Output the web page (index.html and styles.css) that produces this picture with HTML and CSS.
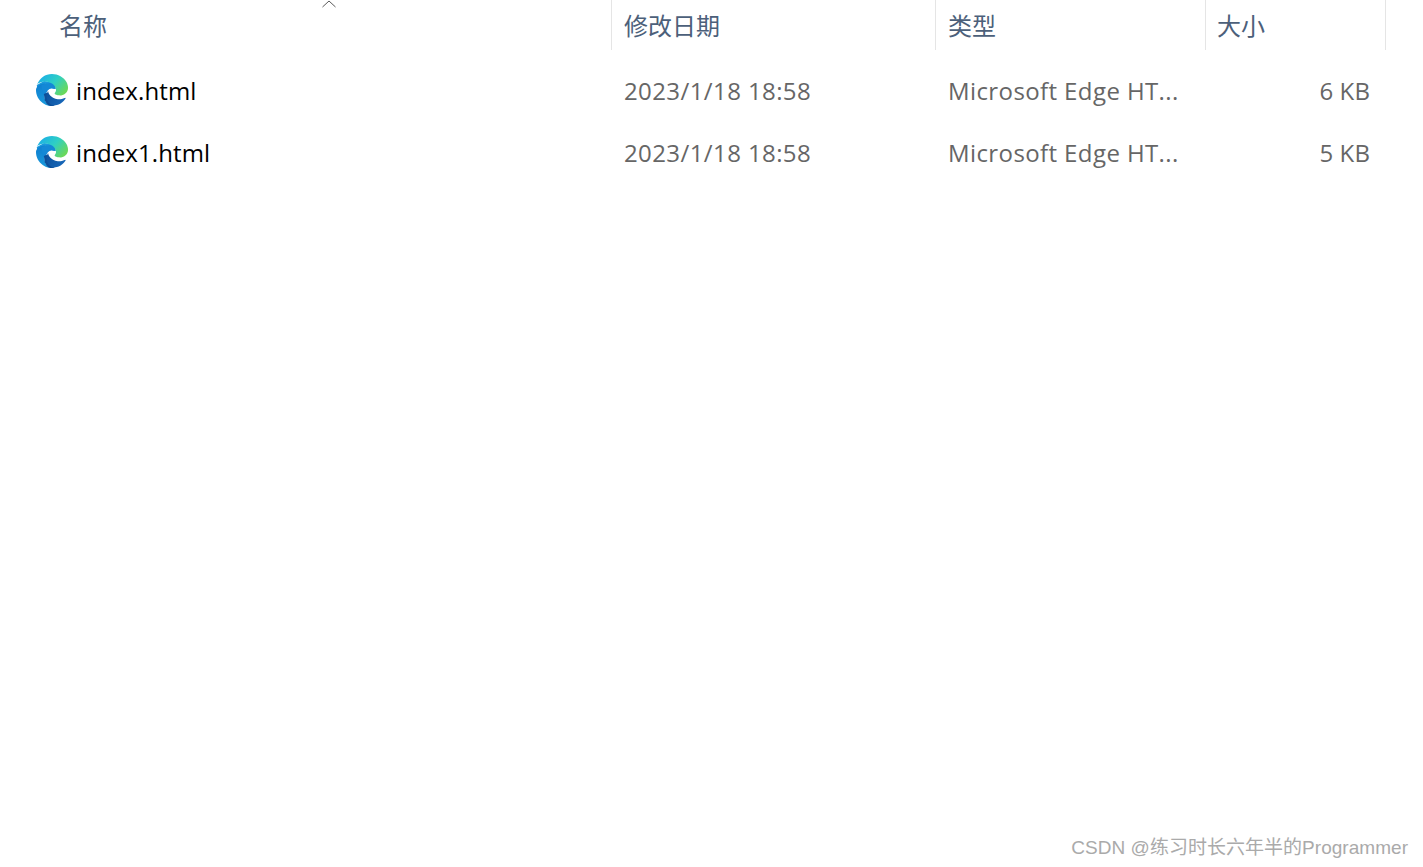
FILE: index.html
```html
<!DOCTYPE html>
<html lang="zh-CN">
<head>
<meta charset="utf-8">
<title>文件列表</title>
<link rel="stylesheet" href="styles.css">
</head>
<body>
<svg class="defs" width="0" height="0" aria-hidden="true">
  <defs>
    <linearGradient id="edgeTop" x1="0.05" y1="0.2" x2="0.95" y2="0.75">
      <stop offset="0" stop-color="#1cb0e6"/>
      <stop offset="0.5" stop-color="#2fcfc4"/>
      <stop offset="1" stop-color="#6ad85a"/>
    </linearGradient>
    <linearGradient id="edgeLeft" x1="0.5" y1="0" x2="0.6" y2="1">
      <stop offset="0" stop-color="#0f7fd0"/>
      <stop offset="1" stop-color="#1a9bdc"/>
    </linearGradient>
    <linearGradient id="edgeWave" x1="0" y1="0" x2="1" y2="0.6">
      <stop offset="0" stop-color="#0c4f9a"/>
      <stop offset="1" stop-color="#1767b8"/>
    </linearGradient>
    <symbol id="edge" viewBox="0 0 24 24">
      <path fill="#1a98dc" d="M0.6 8.2 6 5.2l5.6.8 1.2 3.6-6-2.2L1 12z"/>
      <path fill="url(#edgeLeft)" d="M6.36 16.59q0 1.1.27 2.15.27 1.06.78 2.03.51.96 1.24 1.77.74.82 1.66 1.4-1.47-.2-2.8-.74-1.33-.55-2.48-1.37-1.15-.83-2.08-1.9-.92-1.07-1.58-2.33T.36 14.94Q0 13.54 0 12.06q0-.81.32-1.49.31-.68.83-1.23.53-.55 1.2-.96.66-.4 1.35-.66.74-.27 1.5-.39.78-.12 1.55-.12.7 0 1.42.1.72.12 1.4.35.68.23 1.32.57.63.35 1.16.83-.35 0-.7.07-.33.07-.65.23v-.02q-.63.28-1.2.74-.57.46-1.05 1.04-.48.58-.87 1.26-.38.67-.65 1.39-.27.71-.42 1.44-.15.72-.15 1.38z"/>
      <path fill="#1488d6" d="M4 8 14 6l1 5-1.4.2Q10.5 10 8.8 12.4 7.6 14 7.3 16L5 15z"/>
      <path fill="#0c4f9a" d="M5.9 15 8 14l6 9.9-3.6.2-2.2-1.4-1.6-3z"/>
      <path fill="url(#edgeWave)" d="M21.86 17.86q.14 0 .25.12.1.13.1.25t-.11.33l-.32.46-.43.53-.44.5q-.21.25-.38.42l-.22.23q-.58.53-1.34 1.04-.76.51-1.6.91-.86.4-1.74.64t-1.67.24q-.9 0-1.69-.28-.8-.28-1.48-.78-.68-.5-1.22-1.17-.53-.66-.92-1.44-.38-.77-.58-1.6-.2-.83-.2-1.67 0-1 .32-1.96.33-.97.87-1.8.14.95.55 1.77.41.82 1.02 1.5.6.68 1.38 1.21.78.54 1.64.9.86.36 1.77.56.92.2 1.8.2 1.12 0 2.18-.24 1.06-.23 2.06-.72l.2-.1.2-.05z"/>
      <path fill="url(#edgeTop)" d="M11.96.06q1.7 0 3.33.39 1.63.38 3.07 1.15 1.43.77 2.62 1.93 1.18 1.16 1.98 2.7.49.94.76 1.96.28 1 .28 2.08 0 .89-.23 1.7-.24.8-.69 1.48-.45.68-1.1 1.22-.64.53-1.45.88-.54.24-1.11.36-.58.13-1.16.13-.42 0-.97-.03-.54-.03-1.1-.12-.55-.1-1.05-.28-.5-.19-.84-.5-.12-.09-.23-.24-.1-.16-.1-.33 0-.15.16-.35.16-.2.35-.5.2-.28.36-.68.16-.4.16-.95 0-1.06-.4-1.96-.4-.91-1.06-1.64-.66-.74-1.52-1.28-.86-.55-1.79-.89-.84-.3-1.72-.44-.87-.14-1.76-.14-1.55 0-3.06.45T.94 7.55q.71-1.74 1.81-3.13 1.1-1.38 2.52-2.35Q6.68 1.1 8.37.58q1.7-.52 3.58-.52Z"/>
    </symbol>
  </defs>
</svg>

<main class="list">
  <header class="cols head">
    <div class="hcell hcell-name">
      名称
      <svg class="sort" width="14" height="8" viewBox="0 0 14 8" aria-hidden="true"><path d="M0.5 7 7 1l6.5 6" fill="none" stroke="#5a5a5a" stroke-width="1"/></svg>
    </div>
    <div class="hcell hcell-sep">修改日期</div>
    <div class="hcell hcell-sep">类型</div>
    <div class="hcell hcell-sep hcell-last">大小</div>
  </header>

  <div class="rows">
    <div class="cols row">
      <div class="name"><svg class="icon" aria-hidden="true"><use href="#edge"/></svg><span>index.html</span></div>
      <div class="cell">2023/1/18 18:58</div>
      <div class="cell">Microsoft Edge HT...</div>
      <div class="cell size">6 KB</div>
    </div>
    <div class="cols row">
      <div class="name"><svg class="icon" aria-hidden="true"><use href="#edge"/></svg><span>index1.html</span></div>
      <div class="cell">2023/1/18 18:58</div>
      <div class="cell">Microsoft Edge HT...</div>
      <div class="cell size">5 KB</div>
    </div>
  </div>
</main>

<div class="watermark">CSDN @练习时长六年半的Programmer</div>
</body>
</html>
```
FILE: styles.css
```css
html, body {
  margin: 0;
  padding: 0;
  height: 100%;
  background: #fff;
  overflow: hidden;
}

body {
  position: relative;
  font-family: "Open Sans", "Noto Sans", "Noto Sans CJK SC", sans-serif;
}

.defs {
  display: block;
  position: absolute;
}

.cols {
  display: grid;
  grid-template-columns: 611px 324px 270px 181px;
}

.head {
  height: 50px;
}

.hcell {
  position: relative;
  display: flex;
  align-items: center;
  box-sizing: border-box;
  padding-bottom: 1px;
  font-family: "Noto Sans CJK SC", sans-serif;
  font-size: 24px;
  color: #4c607a;
}

.hcell-name {
  padding-left: 59px;
}

.hcell-sep {
  border-left: 1px solid #e5e5e5;
  padding-left: 12px;
}

.hcell-last {
  border-right: 1px solid #e5e5e5;
  padding-left: 11px;
}

.sort {
  position: absolute;
  left: 322px;
  top: 0;
}

.rows {
  padding-top: 9px;
}

.row {
  height: 62px;
  align-items: center;
  font-size: 24px;
  color: #666;
}

.name {
  display: flex;
  align-items: center;
  gap: 8px;
  padding-left: 36px;
  color: #000;
  letter-spacing: 0.1px;
}

.icon {
  width: 32px;
  height: 32px;
  flex: none;
}

.cell {
  padding-left: 13px;
  white-space: nowrap;
  letter-spacing: 0.4px;
}

.size {
  padding-left: 0;
  padding-right: 16px;
  text-align: right;
  letter-spacing: 0.1px;
}

.watermark {
  position: absolute;
  right: 15px;
  bottom: 8px;
  font-family: "Liberation Sans", "Noto Sans CJK SC", sans-serif;
  font-size: 19px;
  letter-spacing: 0.03px;
  color: #aaa;
  white-space: nowrap;
}
```
